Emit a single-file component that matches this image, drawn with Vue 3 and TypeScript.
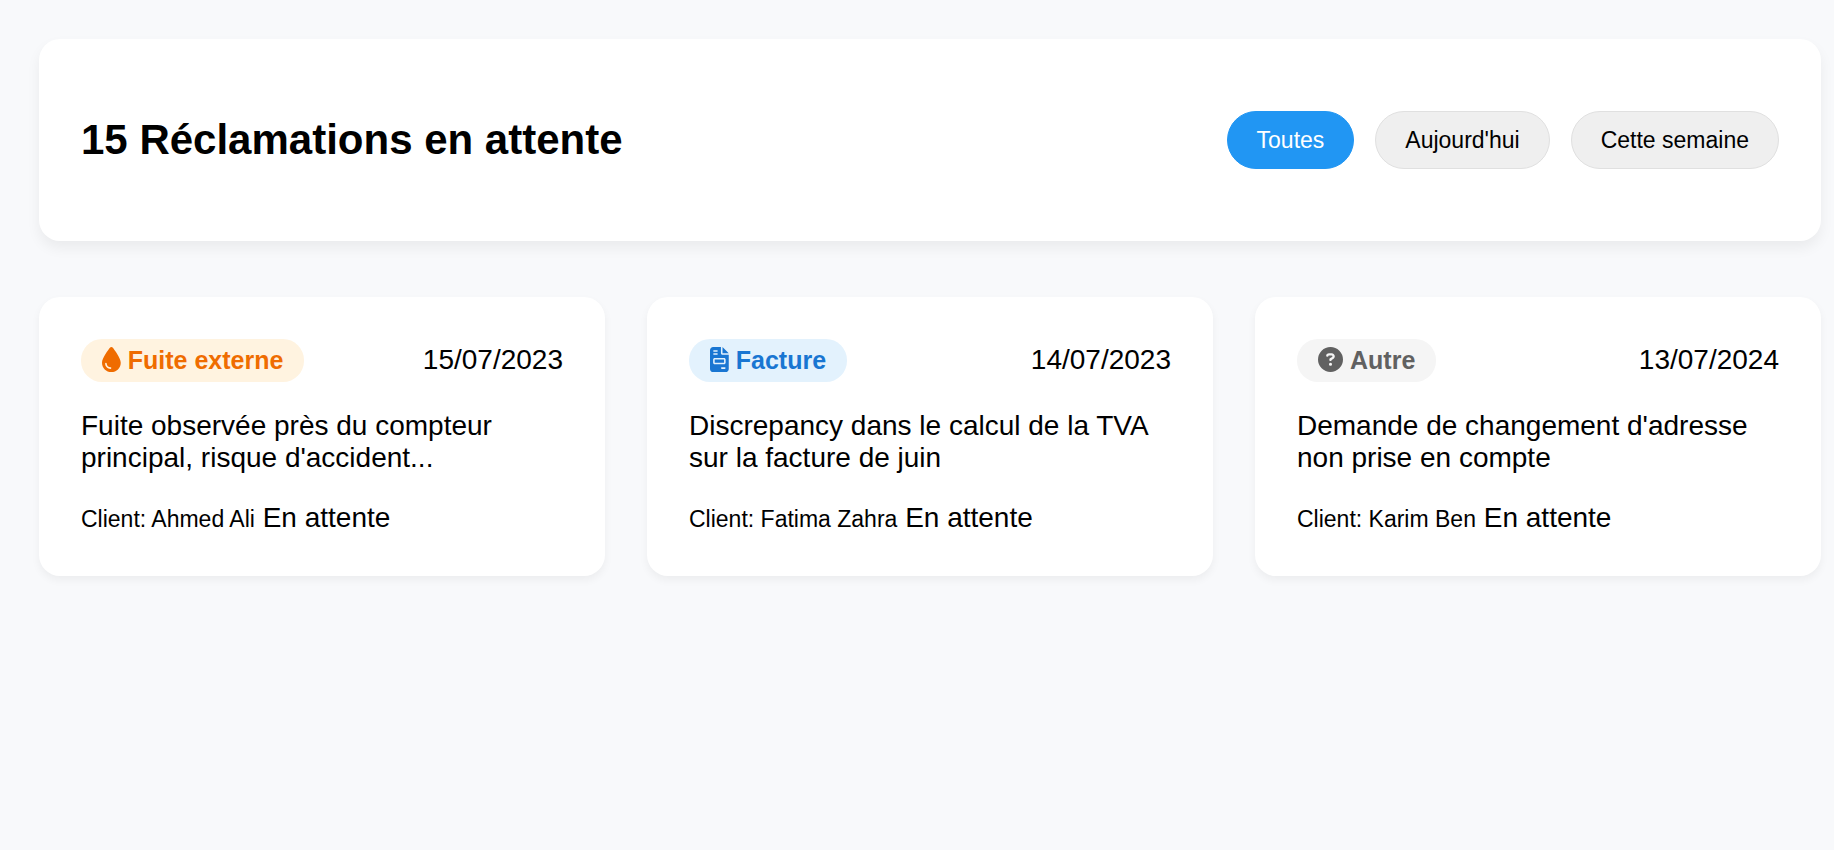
<script setup lang="ts">
import { computed, ref } from 'vue'

type Kind = 'leak' | 'invoice' | 'other'

interface Claim {
  id: number
  kind: Kind
  label: string
  date: string
  description: string
  client: string
  status: string
}

const icons: Record<Kind, { width: number; path: string }> = {
  leak: {
    width: 384,
    path: 'M192 512C86 512 0 426 0 320C0 228.8 130.2 57.7 166.6 11.7C172.6 4.2 181.5 0 191.1 0h1.8c9.6 0 18.5 4.2 24.5 11.7C253.8 57.7 384 228.8 384 320c0 106-86 192-192 192zM96 336c0-8.8-7.2-16-16-16s-16 7.2-16 16c0 61.9 50.1 112 112 112c8.8 0 16-7.2 16-16s-7.2-16-16-16c-44.2 0-80-35.8-80-80z',
  },
  invoice: {
    width: 384,
    path: 'M64 0C28.7 0 0 28.7 0 64V448c0 35.3 28.7 64 64 64H320c35.3 0 64-28.7 64-64V160H256c-17.7 0-32-14.3-32-32V0H64zM256 0V128H384L256 0zM80 64h64c8.8 0 16 7.2 16 16s-7.2 16-16 16H80c-8.8 0-16-7.2-16-16s7.2-16 16-16zm0 64h64c8.8 0 16 7.2 16 16s-7.2 16-16 16H80c-8.8 0-16-7.2-16-16s7.2-16 16-16zm16 96H288c17.7 0 32 14.3 32 32v64c0 17.7-14.3 32-32 32H96c-17.7 0-32-14.3-32-32V256c0-17.7 14.3-32 32-32zm0 32v64H288V256H96zM240 416h64c8.8 0 16 7.2 16 16s-7.2 16-16 16H240c-8.8 0-16-7.2-16-16s7.2-16 16-16z',
  },
  other: {
    width: 512,
    path: 'M256 512A256 256 0 1 0 256 0a256 256 0 1 0 0 512zM169.8 165.3c7.9-22.3 29.1-37.3 52.8-37.3h58.3c34.9 0 63.1 28.3 63.1 63.1c0 22.6-12.1 43.5-31.7 54.8L280 264.4c-.2 13-10.9 23.6-24 23.6c-13.3 0-24-10.7-24-24V250.5c0-8.6 4.6-16.5 12.1-20.8l44.3-25.4c4.7-2.7 7.6-7.7 7.6-13.1c0-8.4-6.8-15.1-15.1-15.1H222.6c-3.4 0-6.4 2.1-7.5 5.3l-.4 1.2c-4.4 12.5-18.2 19-30.6 14.6s-19-18.2-14.6-30.6l.4-1.2zM224 352a32 32 0 1 1 64 0 32 32 0 1 1 -64 0z',
  },
}

const filters = ['Toutes', "Aujourd'hui", 'Cette semaine']
const activeFilter = ref(filters[0])
const pendingCount = ref(15)

const claims = ref<Claim[]>([
  {
    id: 1,
    kind: 'leak',
    label: 'Fuite externe',
    date: '15/07/2023',
    description: "Fuite observée près du compteur principal, risque d'accident...",
    client: 'Ahmed Ali',
    status: 'En attente',
  },
  {
    id: 2,
    kind: 'invoice',
    label: 'Facture',
    date: '14/07/2023',
    description: 'Discrepancy dans le calcul de la TVA sur la facture de juin',
    client: 'Fatima Zahra',
    status: 'En attente',
  },
  {
    id: 3,
    kind: 'other',
    label: 'Autre',
    date: '13/07/2024',
    description: "Demande de changement d'adresse non prise en compte",
    client: 'Karim Ben',
    status: 'En attente',
  },
])

const title = computed(() => `${pendingCount.value} Réclamations en attente`)
</script>

<template>
  <main class="page">
    <header class="header">
      <h2 class="title">{{ title }}</h2>
      <div class="filters">
        <button
          v-for="filter in filters"
          :key="filter"
          type="button"
          class="filter"
          :class="{ active: filter === activeFilter }"
          :aria-pressed="filter === activeFilter"
          @click="activeFilter = filter"
        >
          {{ filter }}
        </button>
      </div>
    </header>

    <section class="grid">
      <article v-for="claim in claims" :key="claim.id" class="card">
        <div class="card-head">
          <span class="badge" :class="claim.kind">
            <svg
              class="icon"
              :viewBox="`0 0 ${icons[claim.kind].width} 512`"
              aria-hidden="true"
            >
              <path :d="icons[claim.kind].path" />
            </svg>
            <span>{{ claim.label }}</span>
          </span>
          <span class="date">{{ claim.date }}</span>
        </div>
        <p class="description">{{ claim.description }}</p>
        <div>
          <small class="client">Client: {{ claim.client }}</small>
          <span>{{ ' ' + claim.status }}</span>
        </div>
      </article>
    </section>
  </main>
</template>

<style>
body {
  margin: 0;
  background: #f8f9fb;
}
</style>

<style scoped>
.page {
  padding: 39px 13px 39px 39px;
  color: #000;
  font-family: 'Liberation Sans', Arial, sans-serif;
  font-size: 28px;
  line-height: 32px;
}

.header {
  display: flex;
  flex-wrap: wrap;
  align-items: center;
  justify-content: space-between;
  gap: 0 42px;
  margin-bottom: 56px;
  padding: 42px;
  border-radius: 21px;
  background: #fff;
  box-shadow: 0 7px 14px rgba(0, 0, 0, 0.06);
}

.title {
  margin: 35px 0;
  font-size: 42px;
  line-height: 48px;
}

.filters {
  display: flex;
  flex-wrap: wrap;
  gap: 21px;
}

.filter {
  padding: 14px 29px;
  border: 1px solid #e0e0e0;
  border-radius: 35px;
  background: #efefef;
  color: #000;
  font-family: inherit;
  font-size: 23px;
  line-height: 28px;
  cursor: pointer;
}

.filter.active {
  border-color: #2196f3;
  background: #2196f3;
  color: #fff;
}

.grid {
  display: grid;
  grid-template-columns: repeat(auto-fill, minmax(525px, 1fr));
  gap: 42px;
}

.card {
  padding: 42px;
  border-radius: 21px;
  background: #fff;
  box-shadow: 0 4px 9px rgba(0, 0, 0, 0.05);
}

.card-head {
  display: flex;
  align-items: flex-start;
  justify-content: space-between;
}

.badge {
  display: flex;
  gap: 7px;
  padding: 7px 21px;
  border-radius: 21px;
  font-size: 25px;
  font-weight: 700;
  line-height: 29px;
}

.date {
  padding-top: 5px;
}

.icon {
  display: block;
  height: 25px;
  margin-top: 1px;
  fill: currentColor;
}

.leak {
  background: #fff3e0;
  color: #ef6c00;
}

.invoice {
  background: #e3f2fd;
  color: #1976d2;
}

.other {
  background: #f5f5f5;
  color: #616161;
}

.description {
  margin: 28px 0;
}

.client {
  font-size: 23px;
  line-height: 27px;
}
</style>
